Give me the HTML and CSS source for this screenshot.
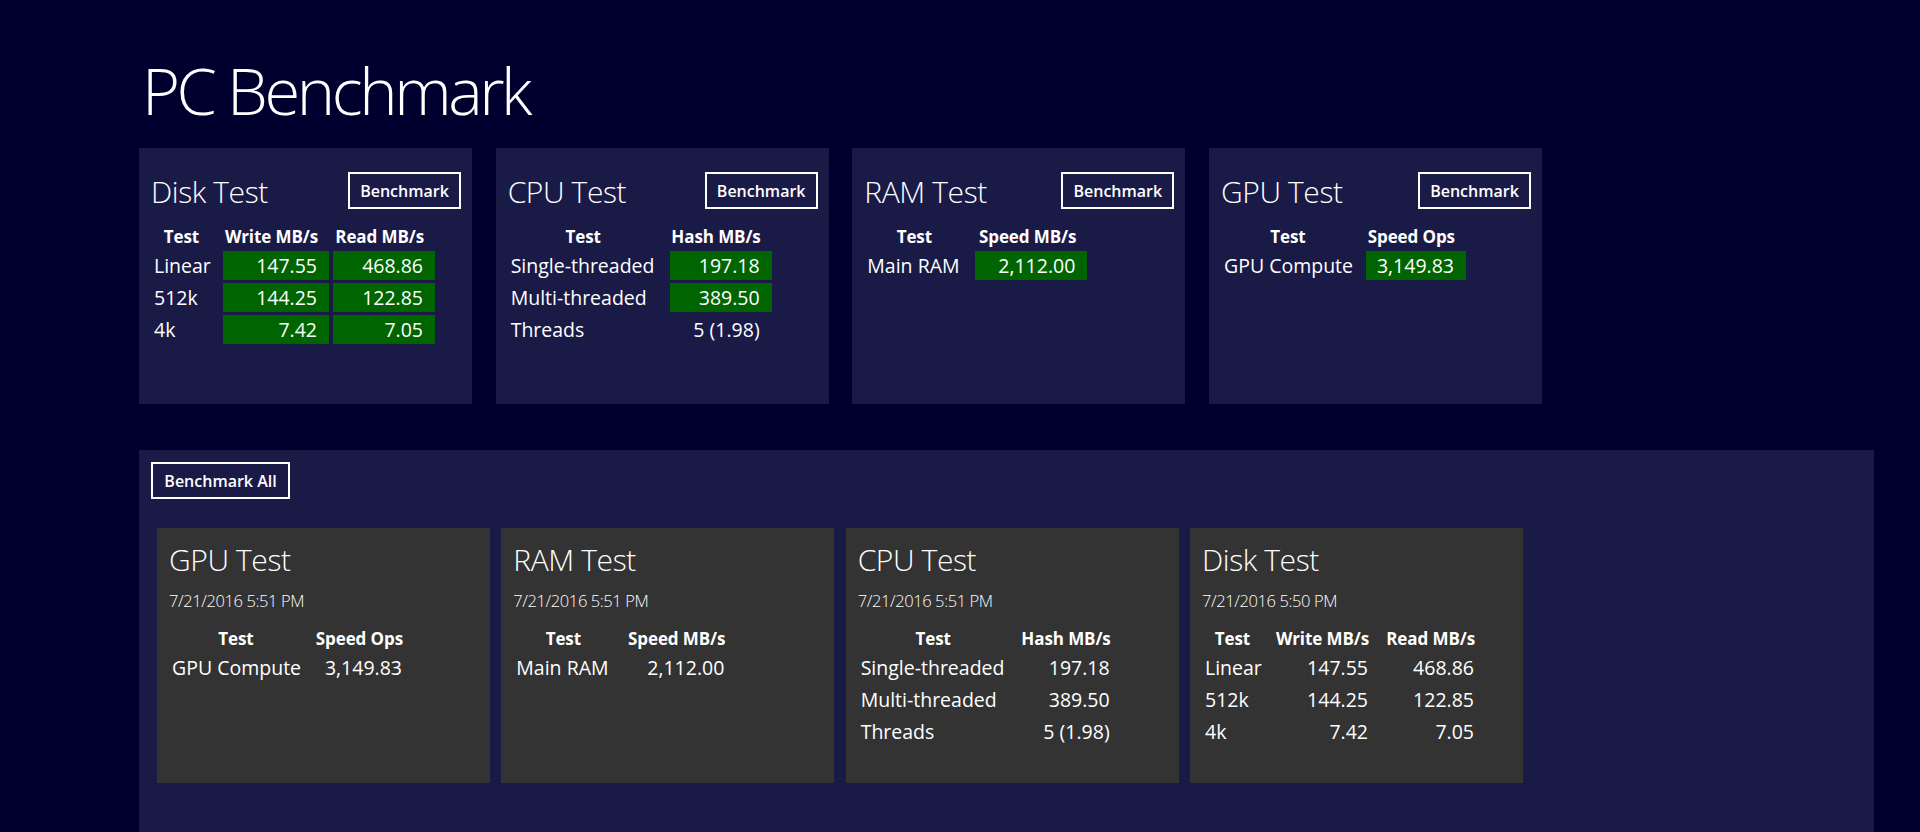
FILE: index.html
```html
<!DOCTYPE html>
<html lang="en">
<head>
<meta charset="utf-8">
<title>PC Benchmark</title>
<link rel="stylesheet" href="styles.css">
</head>
<body>
<div class="page">
  <h1 class="page-title">PC Benchmark</h1>

  <div class="tests">
    <section class="card">
      <div class="card-head">
        <h2 class="card-title">Disk Test</h2>
        <button class="btn">Benchmark</button>
      </div>
      <div class="grid disk">
        <div class="th th-test">Test</div><div class="th th-val">Write MB/s</div><div class="th th-val">Read MB/s</div>
        <div class="td-label">Linear</div><div class="td-val hl">147.55</div><div class="td-val hl">468.86</div>
        <div class="td-label">512k</div><div class="td-val hl">144.25</div><div class="td-val hl">122.85</div>
        <div class="td-label">4k</div><div class="td-val hl">7.42</div><div class="td-val hl">7.05</div>
      </div>
    </section>

    <section class="card">
      <div class="card-head">
        <h2 class="card-title">CPU Test</h2>
        <button class="btn">Benchmark</button>
      </div>
      <div class="grid cpu">
        <div class="th th-test">Test</div><div class="th th-val">Hash MB/s</div>
        <div class="td-label">Single-threaded</div><div class="td-val hl">197.18</div>
        <div class="td-label">Multi-threaded</div><div class="td-val hl">389.50</div>
        <div class="td-label">Threads</div><div class="td-val">5 (1.98)</div>
      </div>
    </section>

    <section class="card">
      <div class="card-head">
        <h2 class="card-title">RAM Test</h2>
        <button class="btn">Benchmark</button>
      </div>
      <div class="grid ram">
        <div class="th th-test">Test</div><div class="th th-val">Speed MB/s</div>
        <div class="td-label">Main RAM</div><div class="td-val hl">2,112.00</div>
      </div>
    </section>

    <section class="card">
      <div class="card-head">
        <h2 class="card-title">GPU Test</h2>
        <button class="btn">Benchmark</button>
      </div>
      <div class="grid gpu">
        <div class="th th-test">Test</div><div class="th th-val">Speed Ops</div>
        <div class="td-label">GPU Compute</div><div class="td-val hl">3,149.83</div>
      </div>
    </section>
  </div>

  <section class="history">
    <button class="btn btn-all">Benchmark All</button>
    <div class="results">
      <article class="result">
        <h2 class="card-title">GPU Test</h2>
        <div class="date">7/21/2016 5:51 PM</div>
        <div class="grid gpu">
          <div class="th th-test">Test</div><div class="th th-val">Speed Ops</div>
          <div class="td-label">GPU Compute</div><div class="td-val">3,149.83</div>
        </div>
      </article>
      <article class="result">
        <h2 class="card-title">RAM Test</h2>
        <div class="date">7/21/2016 5:51 PM</div>
        <div class="grid ram">
          <div class="th th-test">Test</div><div class="th th-val">Speed MB/s</div>
          <div class="td-label">Main RAM</div><div class="td-val">2,112.00</div>
        </div>
      </article>
      <article class="result">
        <h2 class="card-title">CPU Test</h2>
        <div class="date">7/21/2016 5:51 PM</div>
        <div class="grid cpu">
          <div class="th th-test">Test</div><div class="th th-val">Hash MB/s</div>
          <div class="td-label">Single-threaded</div><div class="td-val">197.18</div>
          <div class="td-label">Multi-threaded</div><div class="td-val">389.50</div>
          <div class="td-label">Threads</div><div class="td-val">5 (1.98)</div>
        </div>
      </article>
      <article class="result">
        <h2 class="card-title">Disk Test</h2>
        <div class="date">7/21/2016 5:50 PM</div>
        <div class="grid disk">
          <div class="th th-test">Test</div><div class="th th-val">Write MB/s</div><div class="th th-val">Read MB/s</div>
          <div class="td-label">Linear</div><div class="td-val">147.55</div><div class="td-val">468.86</div>
          <div class="td-label">512k</div><div class="td-val">144.25</div><div class="td-val">122.85</div>
          <div class="td-label">4k</div><div class="td-val">7.42</div><div class="td-val">7.05</div>
        </div>
      </article>
    </div>
  </section>
</div>
</body>
</html>
```

FILE: styles.css
```css
* { box-sizing: border-box; }

html, body {
  margin: 0;
  padding: 0;
  height: 100%;
  overflow: hidden;
}

body {
  background: #00002e;
  color: #ffffff;
  font-family: "Open Sans", "Noto Sans", "Liberation Sans", sans-serif;
}

.page {
  padding: 50px 46px 0 139px;
}

.page-title {
  margin: 0 0 18px 0;
  font-size: 65px;
  line-height: 80px;
  font-weight: 300;
  letter-spacing: -3.4px;
  padding-left: 3px;
}

.tests {
  display: grid;
  grid-template-columns: repeat(4, 333px);
  column-gap: 23.67px;
}

.card {
  background: #1a1a47;
  height: 256px;
  padding: 24px 11px 0 12px;
}

.card-head {
  display: flex;
  justify-content: space-between;
  align-items: flex-start;
  height: 37px;
}

.card-title {
  margin: 0;
  font-size: 30px;
  line-height: 37px;
  font-weight: 300;
  letter-spacing: -0.4px;
  padding-top: 1px;
}

.btn {
  font-family: inherit;
  background: transparent;
  color: #ffffff;
  border: 2px solid #ffffff;
  height: 37px;
  width: 113px;
  padding: 0;
  font-size: 16px;
  font-weight: 600;
  letter-spacing: 0;
  display: flex;
  align-items: center;
  justify-content: center;
  cursor: pointer;
}

.grid {
  display: grid;
  row-gap: 3px;
  column-gap: 4px;
  margin-top: 17px;
}

.grid.disk { grid-template-columns: 68px 106px 102px; }
.grid.cpu  { grid-template-columns: 158px 102px; }
.grid.ram  { grid-template-columns: 107px 112px; }
.grid.gpu  { grid-template-columns: 141px 100px; }

.th {
  font-size: 17px;
  font-weight: 700;
  line-height: 22px;
  letter-spacing: -0.1px;
  margin-bottom: 0;
}

.th-test {
  text-align: center;
  padding-right: 7px;
}

.th-val {
  text-align: right;
  padding-right: 11px;
}

.td-label,
.td-val {
  font-size: 19.5px;
  line-height: 29px;
  height: 29px;
  white-space: nowrap;
}

.td-label {
  padding-left: 3px;
}

.td-val {
  text-align: right;
  padding-right: 12px;
}

.td-val.hl {
  background: #006400;
}

.history {
  margin-top: 46px;
  background: #1a1a47;
  height: 420px;
  padding: 12px 0 0 12px;
}

.btn-all {
  width: 139px;
}

.results {
  display: grid;
  grid-template-columns: repeat(4, 333px);
  column-gap: 11.33px;
  margin-top: 29px;
  margin-left: 6px;
}

.result {
  background: #333333;
  height: 255px;
  padding: 13px 12px 0 12px;
}

.result .card-title {
  padding-top: 0;
}

.date {
  margin-top: 11px;
  font-size: 16.5px;
  line-height: 24px;
  font-weight: 300;
  letter-spacing: -0.4px;
}

.result .grid {
  margin-top: 15px;
}
```
